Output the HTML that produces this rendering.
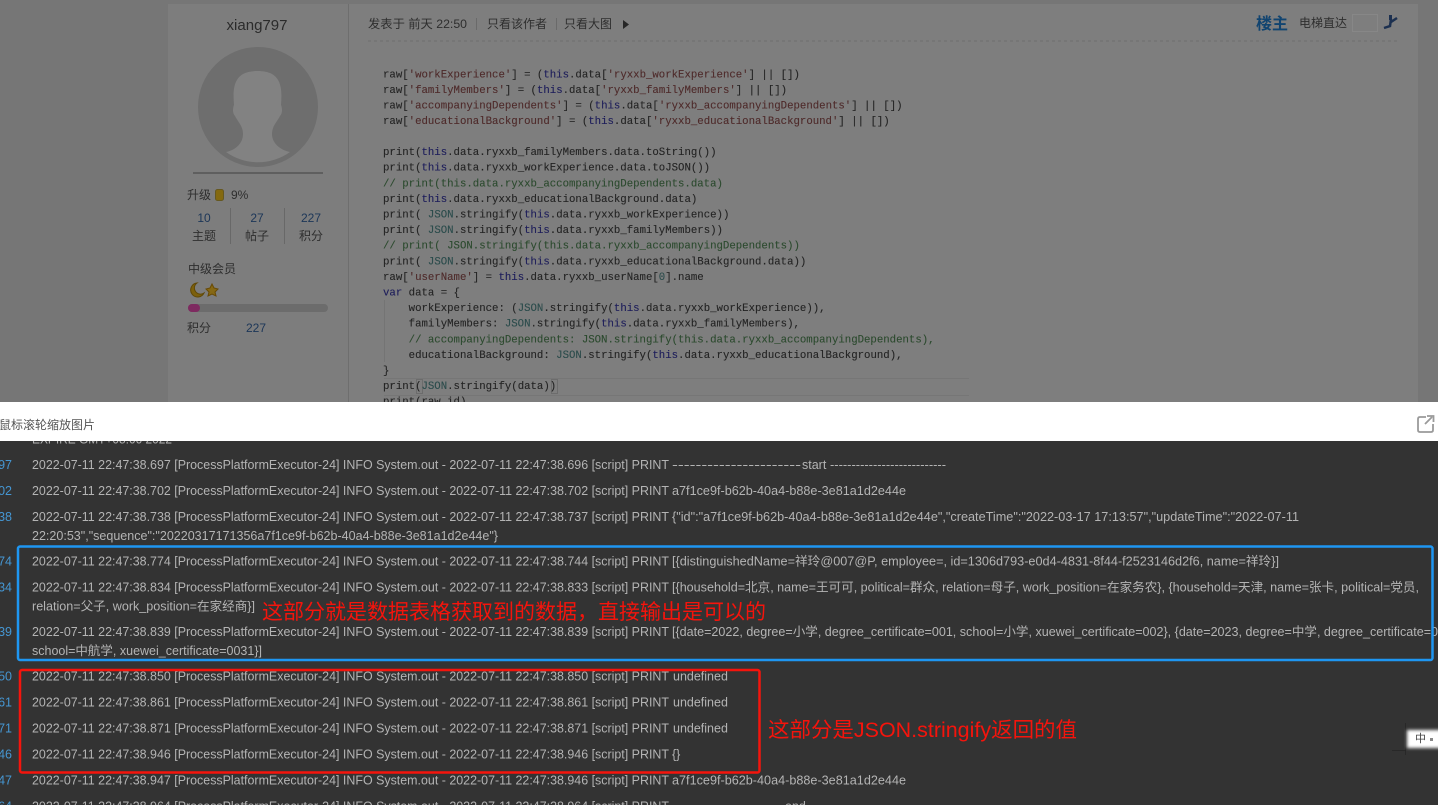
<!DOCTYPE html>
<html>
<head>
<meta charset="utf-8">
<style>
html,body{margin:0;padding:0;width:1438px;height:805px;overflow:hidden;background:#333}
svg{display:block;position:absolute;left:0;top:0}
text{white-space:pre}
.cn{font-family:"Liberation Sans","Noto Sans CJK SC",sans-serif}
.code{font-family:"Liberation Mono",monospace;font-size:10.7px;fill:#242424;stroke:#242424;stroke-width:.12;filter:url(#soft)}
.s{fill:#4e2a2a;stroke:#4e2a2a}.k{fill:#1e1e5a;stroke:#1e1e5a}.c{fill:#2c4a2e;stroke:#2c4a2e}.j{fill:#2c4c4c;stroke:#2c4c4c}
.log{font-family:"Liberation Sans","Noto Sans CJK SC",sans-serif;font-size:12.5px;fill:#b4b4b4}
.n{font-family:"Liberation Sans",sans-serif;font-size:12.5px;fill:#4596d2}
.u{font-family:"Liberation Sans","Noto Sans CJK SC",sans-serif;font-size:12px;fill:#2e2e2e}
.b{fill:#1c3658}
</style>
</head>
<body>
<svg width="1438" height="805" viewBox="0 0 1438 805" xmlns="http://www.w3.org/2000/svg">
<defs>
<filter id="soft" x="-2%" y="-20%" width="104%" height="140%"><feGaussianBlur stdDeviation="0.25"/></filter>
<clipPath id="top"><rect x="0" y="0" width="1438" height="402"/></clipPath>
<clipPath id="logc"><rect x="0" y="441" width="1438" height="364"/></clipPath>
<filter id="bl" x="-30%" y="-50%" width="160%" height="200%"><feGaussianBlur stdDeviation="1.5"/></filter>
</defs>

<g clip-path="url(#top)">
<rect width="1438" height="402" fill="#767676"/>
<rect x="168" y="4" width="1250" height="398" fill="#7e7e7e"/>
<rect x="168" y="4" width="180" height="398" fill="#7d7d7d"/>
<rect x="348" y="4" width="1" height="398" fill="#6e6e6e"/>

<text class="cn" x="257" y="30" font-size="15" fill="#2b2b2b" text-anchor="middle" textLength="61" lengthAdjust="spacingAndGlyphs">xiang797</text>
<circle cx="258" cy="107" r="60" fill="#6e6e6e"/>
<path d="M226 152 C236 150 243 143 243 134 C243 126 238 122 235 116 C232 113 233 107 234 105 C233 92 233 80 243 74 C250 70 265 70 272 74 C282 80 282 92 281 105 C282 107 283 113 280 116 C277 122 272 126 272 134 C272 143 280 150 290 152 A55 55 0 0 1 226 152Z" fill="#828282"/>
<rect x="193" y="172" width="130" height="2" fill="#5f5f5f"/>

<text class="u" x="187" y="199">升级</text>
<rect x="215.500" y="189.500" width="8" height="11" rx="2" fill="#84690f" stroke="#665820" stroke-width="1"/>
<text class="u" x="231" y="199">9%</text>

<text class="u b" x="204" y="222" text-anchor="middle">10</text>
<text class="u b" x="257" y="222" text-anchor="middle">27</text>
<text class="u b" x="311" y="222" text-anchor="middle">227</text>
<text class="u" x="204" y="240" text-anchor="middle">主题</text>
<text class="u" x="257" y="240" text-anchor="middle">帖子</text>
<text class="u" x="311" y="240" text-anchor="middle">积分</text>
<rect x="230" y="208" width="1" height="36" fill="#686868"/>
<rect x="284" y="208" width="1" height="36" fill="#686868"/>

<text class="u" x="188" y="273">中级会员</text>
<path d="M197 283 A7 7 0 1 0 204 293 A6 6 0 0 1 197 283Z" fill="#7c600c" stroke="#604806" stroke-width="1"/>
<path d="M212 284 L214 288 L218 289 L215 292 L216 296 L212 294 L208 296 L209 292 L206 289 L210 288Z" fill="#866814" stroke="#684a06" stroke-width="1"/>
<rect x="188" y="304" width="140" height="8" rx="4" fill="#6c6c6c"/>
<rect x="188" y="304" width="12" height="8" rx="4" fill="#7e2a60"/>
<text class="u" x="187" y="332">积分</text>
<text class="u b" x="246" y="332">227</text>

<text class="u" x="368" y="28" textLength="99" lengthAdjust="spacingAndGlyphs">发表于 前天 22:50</text>
<rect x="476" y="18" width="1" height="12" fill="#6a6a6a"/>
<text class="u" x="487" y="28">只看该作者</text>
<rect x="556" y="18" width="1" height="12" fill="#6a6a6a"/>
<text class="u" x="564" y="28">只看大图</text>
<path d="M623 20 L629 24.500 L623 29Z" fill="#262626"/>
<line x1="368" y1="41" x2="1398" y2="41" stroke="#6e6e6e" stroke-dasharray="3 3"/>

<text class="cn" x="1256" y="29" font-size="16" font-weight="bold" fill="#114470">楼主</text>
<text class="u" x="1299" y="27">电梯直达</text>
<rect x="1352.500" y="14.500" width="25" height="17" fill="none" stroke="#878787"/>
<path d="M1384 28 L1390 26 L1391 19 M1391 22 L1397 18" fill="none" stroke="#1c3050" stroke-width="2.500"/>
<path d="M1389 15 h3 v5 h-3z" fill="#1c3050"/>

<rect x="384" y="378" width="585" height="1" fill="#767676"/>
<rect x="384" y="395" width="585" height="1" fill="#767676"/>
<rect x="384" y="300" width="1" height="62" fill="#747474"/>
<rect x="416.500" y="379.500" width="6" height="14" fill="none" stroke="#6c6c6c"/>
<rect x="551.500" y="379.500" width="6" height="14" fill="none" stroke="#6c6c6c"/>

<g transform="translate(0,-.7)">
<text class="code" x="383" y="78">raw[<tspan class="s">'workExperience'</tspan>] = (<tspan class="k">this</tspan>.data[<tspan class="s">'ryxxb_workExperience'</tspan>] || [])</text>
<text class="code" x="383" y="93.600">raw[<tspan class="s">'familyMembers'</tspan>] = (<tspan class="k">this</tspan>.data[<tspan class="s">'ryxxb_familyMembers'</tspan>] || [])</text>
<text class="code" x="383" y="109">raw[<tspan class="s">'accompanyingDependents'</tspan>] = (<tspan class="k">this</tspan>.data[<tspan class="s">'ryxxb_accompanyingDependents'</tspan>] || [])</text>
<text class="code" x="383" y="124.600">raw[<tspan class="s">'educationalBackground'</tspan>] = (<tspan class="k">this</tspan>.data[<tspan class="s">'ryxxb_educationalBackground'</tspan>] || [])</text>
<text class="code" x="383" y="155.800">print(<tspan class="k">this</tspan>.data.ryxxb_familyMembers.data.toString())</text>
<text class="code" x="383" y="171.400">print(<tspan class="k">this</tspan>.data.ryxxb_workExperience.data.toJSON())</text>
<text class="code" x="383" y="187"><tspan class="c">// print(this.data.ryxxb_accompanyingDependents.data)</tspan></text>
<text class="code" x="383" y="202.600">print(<tspan class="k">this</tspan>.data.ryxxb_educationalBackground.data)</text>
<text class="code" x="383" y="218.200">print( <tspan class="j">JSON</tspan>.stringify(<tspan class="k">this</tspan>.data.ryxxb_workExperience))</text>
<text class="code" x="383" y="233.800">print( <tspan class="j">JSON</tspan>.stringify(<tspan class="k">this</tspan>.data.ryxxb_familyMembers))</text>
<text class="code" x="383" y="249.400"><tspan class="c">// print( JSON.stringify(this.data.ryxxb_accompanyingDependents))</tspan></text>
<text class="code" x="383" y="265">print( <tspan class="j">JSON</tspan>.stringify(<tspan class="k">this</tspan>.data.ryxxb_educationalBackground.data))</text>
<text class="code" x="383" y="280.600">raw[<tspan class="s">'userName'</tspan>] = <tspan class="k">this</tspan>.data.ryxxb_userName[<tspan class="j">0</tspan>].name</text>
<text class="code" x="383" y="296.200"><tspan class="k">var</tspan> data = {</text>
<text class="code" x="383" y="311.800">    workExperience: (<tspan class="j">JSON</tspan>.stringify(<tspan class="k">this</tspan>.data.ryxxb_workExperience)),</text>
<text class="code" x="383" y="327.400">    familyMembers: <tspan class="j">JSON</tspan>.stringify(<tspan class="k">this</tspan>.data.ryxxb_familyMembers),</text>
<text class="code" x="383" y="343"><tspan class="c">    // accompanyingDependents: JSON.stringify(this.data.ryxxb_accompanyingDependents),</tspan></text>
<text class="code" x="383" y="358.600">    educationalBackground: <tspan class="j">JSON</tspan>.stringify(<tspan class="k">this</tspan>.data.ryxxb_educationalBackground),</text>
<text class="code" x="383" y="374.200">}</text>
<text class="code" x="383" y="389.800">print(<tspan class="j">JSON</tspan>.stringify(data))</text>
<text class="code" x="383" y="405">print(raw.id)</text>
</g>
</g>

<rect x="0" y="402" width="1438" height="39" fill="#fff"/>
<text class="cn" x="-1" y="429" font-size="12" fill="#555">鼠标滚轮缩放图片</text>
<path d="M1426 417 H1420 Q1418 417 1418 419 V430 Q1418 432 1420 432 H1431 Q1433 432 1433 430 V424" fill="none" stroke="#9a9a9a" stroke-width="1.800"/>
<path d="M1425 424 L1432 417 M1427 416 H1433.500 V422" fill="none" stroke="#9a9a9a" stroke-width="1.800"/>

<rect x="0" y="441" width="1438" height="364" fill="#333"/>
<g clip-path="url(#logc)">
<text class="log" x="32" y="443.500" textLength="140" lengthAdjust="spacingAndGlyphs">EXPIRE GMT+08:00 2022</text>

<text class="n" x="12" y="469" text-anchor="end">697</text>
<text class="n" x="12" y="495" text-anchor="end">702</text>
<text class="n" x="12" y="521" text-anchor="end">738</text>
<text class="n" x="12" y="565.500" text-anchor="end">774</text>
<text class="n" x="12" y="591.500" text-anchor="end">834</text>
<text class="n" x="12" y="636" text-anchor="end">839</text>
<text class="n" x="12" y="680.500" text-anchor="end">850</text>
<text class="n" x="12" y="706.500" text-anchor="end">861</text>
<text class="n" x="12" y="732.500" text-anchor="end">871</text>
<text class="n" x="12" y="758.500" text-anchor="end">946</text>
<text class="n" x="12" y="784.500" text-anchor="end">947</text>
<text class="n" x="12" y="810.500" text-anchor="end">964</text>

<text class="log" x="32" y="469" textLength="637" lengthAdjust="spacingAndGlyphs">2022-07-11 22:47:38.697 [ProcessPlatformExecutor-24] INFO System.out - 2022-07-11 22:47:38.696 [script] PRINT</text>
<text class="log" x="672" y="469" textLength="129" lengthAdjust="spacingAndGlyphs">----------------------</text>
<text class="log" x="802" y="469">start</text>
<text class="log" x="830" y="469" textLength="116" lengthAdjust="spacingAndGlyphs">---------------------------</text>
<text class="log" x="32" y="495" textLength="637" lengthAdjust="spacingAndGlyphs">2022-07-11 22:47:38.702 [ProcessPlatformExecutor-24] INFO System.out - 2022-07-11 22:47:38.702 [script] PRINT</text>
<text class="log" x="672" y="495" textLength="234" lengthAdjust="spacingAndGlyphs">a7f1ce9f-b62b-40a4-b88e-3e81a1d2e44e</text>
<text class="log" x="32" y="521" textLength="637" lengthAdjust="spacingAndGlyphs">2022-07-11 22:47:38.738 [ProcessPlatformExecutor-24] INFO System.out - 2022-07-11 22:47:38.737 [script] PRINT</text>
<text class="log" x="672" y="521" textLength="627" lengthAdjust="spacingAndGlyphs">{"id":"a7f1ce9f-b62b-40a4-b88e-3e81a1d2e44e","createTime":"2022-03-17 17:13:57","updateTime":"2022-07-11</text>
<text class="log" x="32" y="540" textLength="466" lengthAdjust="spacingAndGlyphs">22:20:53","sequence":"20220317171356a7f1ce9f-b62b-40a4-b88e-3e81a1d2e44e"}</text>
<text class="log" x="32" y="565.500" textLength="637" lengthAdjust="spacingAndGlyphs">2022-07-11 22:47:38.774 [ProcessPlatformExecutor-24] INFO System.out - 2022-07-11 22:47:38.744 [script] PRINT</text>
<text class="log" x="672" y="565.500" textLength="607" lengthAdjust="spacingAndGlyphs">[{distinguishedName=祥玲@007@P, employee=, id=1306d793-e0d4-4831-8f44-f2523146d2f6, name=祥玲}]</text>
<text class="log" x="32" y="591.500" textLength="637" lengthAdjust="spacingAndGlyphs">2022-07-11 22:47:38.834 [ProcessPlatformExecutor-24] INFO System.out - 2022-07-11 22:47:38.833 [script] PRINT</text>
<text class="log" x="672" y="591.500" textLength="747" lengthAdjust="spacingAndGlyphs">[{household=北京, name=王可可, political=群众, relation=母子, work_position=在家务农}, {household=天津, name=张卡, political=党员,</text>
<text class="log" x="32" y="610.500" textLength="223" lengthAdjust="spacingAndGlyphs">relation=父子, work_position=在家经商}]</text>
<text class="log" x="32" y="636" textLength="637" lengthAdjust="spacingAndGlyphs">2022-07-11 22:47:38.839 [ProcessPlatformExecutor-24] INFO System.out - 2022-07-11 22:47:38.839 [script] PRINT</text>
<text class="log" x="672" y="636" textLength="766" lengthAdjust="spacingAndGlyphs">[{date=2022, degree=小学, degree_certificate=001, school=小学, xuewei_certificate=002}, {date=2023, degree=中学, degree_certificate=0</text>
<text class="log" x="32" y="655" textLength="230" lengthAdjust="spacingAndGlyphs">school=中航学, xuewei_certificate=0031}]</text>
<text class="log" x="32" y="680.500" textLength="637" lengthAdjust="spacingAndGlyphs">2022-07-11 22:47:38.850 [ProcessPlatformExecutor-24] INFO System.out - 2022-07-11 22:47:38.850 [script] PRINT</text>
<text class="log" x="673" y="680.500">undefined</text>
<text class="log" x="32" y="706.500" textLength="637" lengthAdjust="spacingAndGlyphs">2022-07-11 22:47:38.861 [ProcessPlatformExecutor-24] INFO System.out - 2022-07-11 22:47:38.861 [script] PRINT</text>
<text class="log" x="673" y="706.500">undefined</text>
<text class="log" x="32" y="732.500" textLength="637" lengthAdjust="spacingAndGlyphs">2022-07-11 22:47:38.871 [ProcessPlatformExecutor-24] INFO System.out - 2022-07-11 22:47:38.871 [script] PRINT</text>
<text class="log" x="673" y="732.500">undefined</text>
<text class="log" x="32" y="758.500" textLength="637" lengthAdjust="spacingAndGlyphs">2022-07-11 22:47:38.946 [ProcessPlatformExecutor-24] INFO System.out - 2022-07-11 22:47:38.946 [script] PRINT</text>
<text class="log" x="672" y="758.500">{}</text>
<text class="log" x="32" y="784.500" textLength="637" lengthAdjust="spacingAndGlyphs">2022-07-11 22:47:38.947 [ProcessPlatformExecutor-24] INFO System.out - 2022-07-11 22:47:38.946 [script] PRINT</text>
<text class="log" x="672" y="784.500" textLength="234" lengthAdjust="spacingAndGlyphs">a7f1ce9f-b62b-40a4-b88e-3e81a1d2e44e</text>
<text class="log" x="32" y="810.500" textLength="637" lengthAdjust="spacingAndGlyphs">2022-07-11 22:47:38.964 [ProcessPlatformExecutor-24] INFO System.out - 2022-07-11 22:47:38.964 [script] PRINT</text>
<text class="log" x="672" y="810.500" textLength="111" lengthAdjust="spacingAndGlyphs">----------------------</text>
<text class="log" x="785" y="810.500">end</text>
</g>

<rect x="18" y="546.500" width="1414.500" height="113.500" rx="2" fill="none" stroke="#1e96f2" stroke-width="2.500"/>
<rect x="20" y="670" width="739.500" height="102.500" rx="2" fill="none" stroke="#f5140c" stroke-width="2.500"/>

<text class="cn" x="262" y="619" font-size="21" fill="#f5140c">这部分就是数据表格获取到的数据，直接输出是可以的</text>
<text class="cn" x="768" y="737" font-size="21" fill="#f5140c" textLength="309" lengthAdjust="spacingAndGlyphs">这部分是JSON.stringify返回的值</text>

<rect x="1405" y="723" width="1" height="32" fill="#222" opacity=".6"/>
<rect x="1392" y="750" width="14" height="1" fill="#222" opacity=".6"/>
<rect x="1407" y="730" width="36" height="18" fill="#fff" filter="url(#bl)"/>
<text class="cn" x="1415" y="742" font-size="11" fill="#444">中</text>
<rect x="1430" y="738" width="3" height="3" fill="#888"/>
</svg>
</body>
</html>
